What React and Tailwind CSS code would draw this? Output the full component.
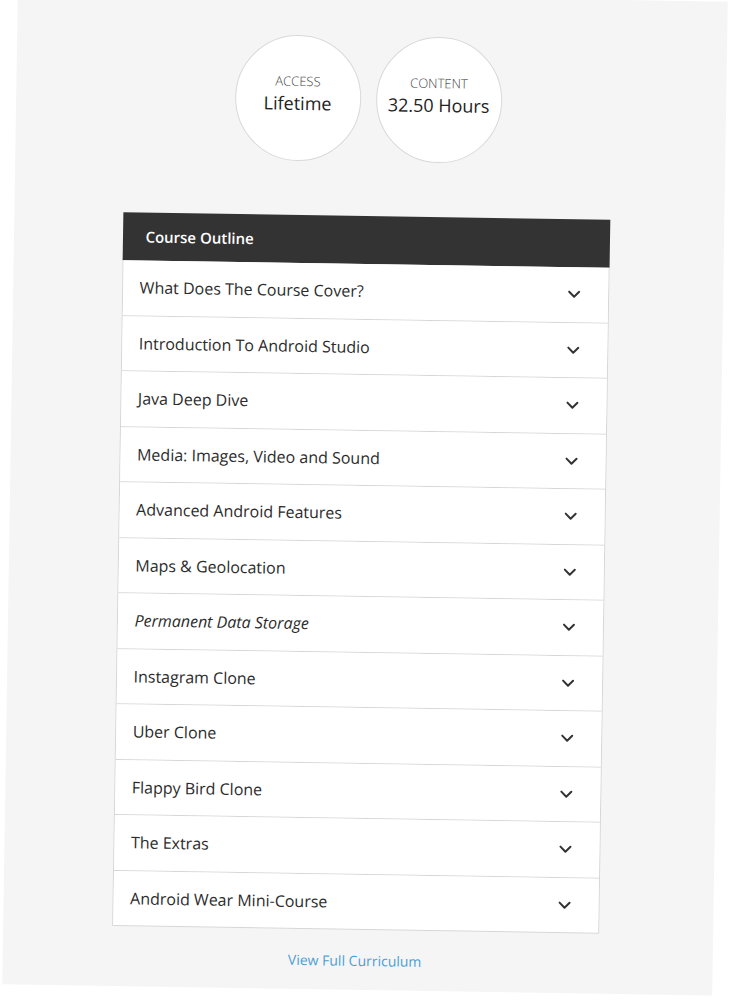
import React from 'react';

const SECTIONS = [
    { title: 'What Does The Course Cover?' },
    { title: 'Introduction To Android Studio' },
    { title: 'Java Deep Dive' },
    { title: 'Media: Images, Video and Sound' },
    { title: 'Advanced Android Features' },
    { title: 'Maps & Geolocation' },
    { title: 'Permanent Data Storage', italic: true },
    { title: 'Instagram Clone' },
    { title: 'Uber Clone' },
    { title: 'Flappy Bird Clone' },
    { title: 'The Extras' },
    { title: 'Android Wear Mini-Course' },
];

function Chevron() {
    return (
        <svg className="w-[14px] h-[14px] text-[#333]" viewBox="0 0 14 14" fill="none" stroke="currentColor">
            <path d="M2 4.5l5 5 5-5" strokeWidth={2} strokeLinecap="round" strokeLinejoin="round" />
        </svg>
    );
}

function StatCircle({ label, value }) {
    return (
        <div className="w-[126px] h-[126px] rounded-full bg-white border border-[#d9d9d9] flex flex-col items-center justify-center pb-[8px]">
            <div className="text-[13px] leading-[18px] font-light text-[#444] uppercase">{label}</div>
            <div className="text-[18px] leading-[26px] text-[#222]">{value}</div>
        </div>
    );
}

export default function App() {
    return (
        <div className="w-[729px] h-[1000px] bg-white overflow-hidden" style={{ fontFamily: '"Open Sans", "Liberation Sans", sans-serif' }}>
            <div className="ml-[10px] -mt-[4px] w-[710px] h-[994px] bg-[#f5f5f5] rotate-[0.9deg] flex flex-col items-center pt-[40px] pr-[6px]">
                {/* stats */}
                <div className="flex gap-[15px]">
                    <StatCircle label="Access" value="Lifetime" />
                    <StatCircle label="Content" value="32.50 Hours" />
                </div>

                {/* outline */}
                <div className="w-[487px] mt-[54px]">
                    <div className="h-[48px] bg-[#333] flex items-center px-[23px] text-white text-[15px] font-semibold">
                        Course Outline
                    </div>
                    <div className="border-x border-[#d6d6d6]">
                        {SECTIONS.map(s => (
                            <div
                                key={s.title}
                                className="h-[55.5px] bg-white border-b border-[#d6d6d6] flex items-center justify-between pl-[17px] pr-[27px]"
                            >
                                <span className={`text-[16px] text-[#2b2b2b] ${s.italic ? 'italic' : ''}`}>{s.title}</span>
                                <Chevron />
                            </div>
                        ))}
                    </div>
                </div>

                <a href="#" className="mt-[21px] text-[14px] leading-[20px] text-[#4a9fd5]">
                    View Full Curriculum
                </a>
            </div>
        </div>
    );
}
